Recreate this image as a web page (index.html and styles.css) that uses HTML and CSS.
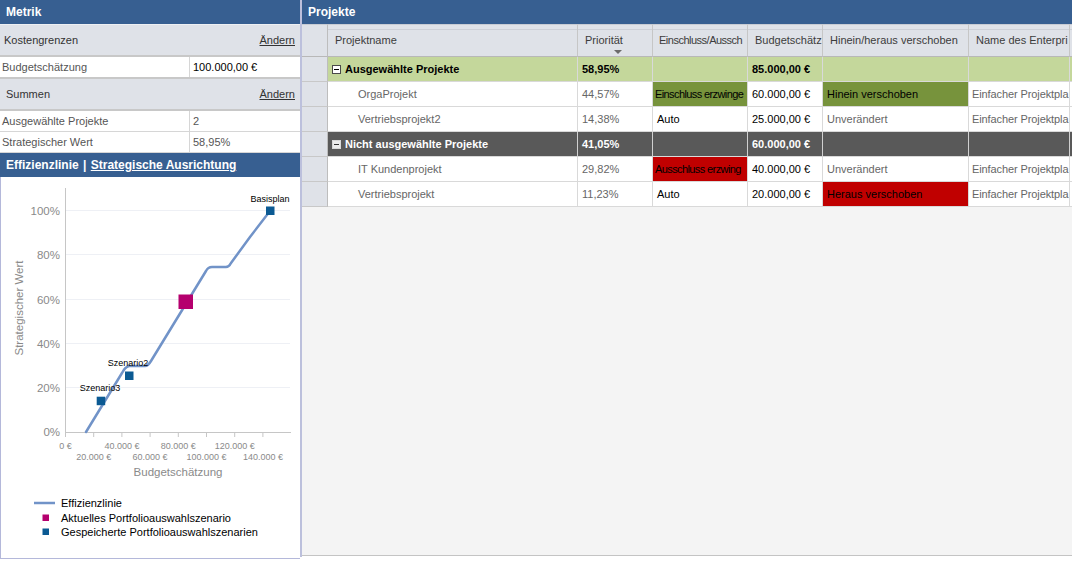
FILE: index.html
```html
<!DOCTYPE html>
<html lang="de">
<head>
<meta charset="utf-8">
<title>Portfolioanalyse</title>
<link rel="stylesheet" href="styles.css">
</head>
<body>
<div class="app">
  <aside class="left">
    <div class="ptitle">Metrik</div>
    <div class="band band-first"><span>Kostengrenzen</span><a class="link">Ändern</a></div>
    <div class="kv kv-single"><div class="k">Budgetschätzung</div><div class="v v-strong">100.000,00 €</div></div>
    <div class="band band-sum"><span>Summen</span><a class="link">Ändern</a></div>
    <div class="kvlist">
      <div class="kv"><div class="k">Ausgewählte Projekte</div><div class="v">2</div></div>
      <div class="kv"><div class="k">Strategischer Wert</div><div class="v">58,95%</div></div>
    </div>
    <div class="ptitle">Effizienzlinie <span class="sep">|</span> <a class="tlink">Strategische Ausrichtung</a></div>
    <div class="chart">
      <svg class="plot" width="299" height="381" viewBox="1 177 299 381" xmlns="http://www.w3.org/2000/svg" font-family="Liberation Sans, Arial, sans-serif">
        <g stroke="#eef0f5" stroke-width="1">
          <line x1="66" y1="210.5" x2="290" y2="210.5"/>
          <line x1="66" y1="254.5" x2="290" y2="254.5"/>
          <line x1="66" y1="299.5" x2="290" y2="299.5"/>
          <line x1="66" y1="343.5" x2="290" y2="343.5"/>
          <line x1="66" y1="387.5" x2="290" y2="387.5"/>
        </g>
        <g stroke="#c6c6c6" stroke-width="1">
          <line x1="65.5" y1="188" x2="65.5" y2="433"/>
          <line x1="65" y1="432.5" x2="291" y2="432.5"/>
          <line x1="65.5" y1="432" x2="65.5" y2="437"/>
          <line x1="93.7" y1="432" x2="93.7" y2="437"/>
          <line x1="121.9" y1="432" x2="121.9" y2="437"/>
          <line x1="150.1" y1="432" x2="150.1" y2="437"/>
          <line x1="178.3" y1="432" x2="178.3" y2="437"/>
          <line x1="206.5" y1="432" x2="206.5" y2="437"/>
          <line x1="234.7" y1="432" x2="234.7" y2="437"/>
          <line x1="262.9" y1="432" x2="262.9" y2="437"/>
        </g>
        <g fill="#8a8a8a" font-size="11.5" text-anchor="end">
          <text x="60" y="215">100%</text>
          <text x="60" y="259">80%</text>
          <text x="60" y="303.5">60%</text>
          <text x="60" y="347.5">40%</text>
          <text x="60" y="392">20%</text>
          <text x="60" y="436">0%</text>
        </g>
        <g fill="#8a8a8a" font-size="9" text-anchor="middle">
          <text x="65.5" y="448.5">0 €</text>
          <text x="121.9" y="448.5">40.000 €</text>
          <text x="178.3" y="448.5">80.000 €</text>
          <text x="234.7" y="448.5">120.000 €</text>
          <text x="93.7" y="460">20.000 €</text>
          <text x="150.1" y="460">60.000 €</text>
          <text x="206.5" y="460">100.000 €</text>
          <text x="262.9" y="460">140.000 €</text>
        </g>
        <text x="178" y="476" fill="#8a8a8a" font-size="11.5" text-anchor="middle">Budgetschätzung</text>
        <text transform="translate(23 308) rotate(-90)" fill="#8a8a8a" font-size="11.5" text-anchor="middle">Strategischer Wert</text>
        <path d="M86 432 L122 373 Q125 367 129 366 L145 366 Q148 366 151 361 L206 271 Q208 267 212 267 L226 267 Q229 267 231 263 L250 237 L270 211" fill="none" stroke="#7193c8" stroke-width="2.5" stroke-linejoin="round" stroke-linecap="round"/>
        <rect x="178.5" y="294.5" width="14.5" height="14.5" fill="#b5006e"/>
        <rect x="266" y="206.5" width="8.5" height="8.5" fill="#0b5a93"/>
        <rect x="125" y="371.5" width="8.5" height="8.5" fill="#0b5a93"/>
        <rect x="96.7" y="396.7" width="8.5" height="8.5" fill="#0b5a93"/>
        <g fill="#000" font-size="9" text-anchor="middle">
          <text x="270" y="202">Basisplan</text>
          <text x="128" y="365.5">Szenario2</text>
          <text x="100" y="391">Szenario3</text>
        </g>
        <line x1="34" y1="503" x2="55" y2="503" stroke="#7193c8" stroke-width="2.5"/>
        <rect x="42.5" y="514.5" width="6.5" height="6.5" fill="#b5006e"/>
        <rect x="42.5" y="528.5" width="6.5" height="6.5" fill="#0b5a93"/>
        <g fill="#000" font-size="11">
          <text x="61" y="507">Effizienzlinie</text>
          <text x="61" y="522">Aktuelles Portfolioauswahlszenario</text>
          <text x="61" y="536">Gespeicherte Portfolioauswahlszenarien</text>
        </g>
      </svg>
    </div>
  </aside>
  <div class="divider"></div>
  <main class="right">
    <div class="ptitle">Projekte</div>
    <div class="gridwrap">
      <div class="grid">
        <div class="hc hc-ind"></div>
        <div class="hc">Projektname</div>
        <div class="hc">Priorität<span class="sort"></span></div>
        <div class="hc hc-tight">Einschluss/Aussch</div>
        <div class="hc">Budgetschätz</div>
        <div class="hc">Hinein/heraus verschoben</div>
        <div class="hc">Name des Enterpri</div>
        <div class="hc"></div>

        <div class="c ind"></div>
        <div class="c g1 gname"><span class="tog"></span>Ausgewählte Projekte</div>
        <div class="c g1">58,95%</div>
        <div class="c g1"></div>
        <div class="c g1">85.000,00 €</div>
        <div class="c g1"></div>
        <div class="c g1"></div>
        <div class="c g1"></div>

        <div class="c ind"></div>
        <div class="c name">OrgaProjekt</div>
        <div class="c muted">44,57%</div>
        <div class="c dark tight green">Einschluss erzwinge</div>
        <div class="c dark">60.000,00 €</div>
        <div class="c dark green">Hinein verschoben</div>
        <div class="c muted last">Einfacher Projektpla</div>
        <div class="c"></div>

        <div class="c ind"></div>
        <div class="c name">Vertriebsprojekt2</div>
        <div class="c muted">14,38%</div>
        <div class="c dark">Auto</div>
        <div class="c dark">25.000,00 €</div>
        <div class="c muted">Unverändert</div>
        <div class="c muted last">Einfacher Projektpla</div>
        <div class="c"></div>

        <div class="c ind"></div>
        <div class="c g2 gname"><span class="tog tog-dark"></span>Nicht ausgewählte Projekte</div>
        <div class="c g2">41,05%</div>
        <div class="c g2"></div>
        <div class="c g2">60.000,00 €</div>
        <div class="c g2"></div>
        <div class="c g2"></div>
        <div class="c g2"></div>

        <div class="c ind"></div>
        <div class="c name">IT Kundenprojekt</div>
        <div class="c muted">29,82%</div>
        <div class="c dark tight red">Ausschluss erzwing</div>
        <div class="c dark">40.000,00 €</div>
        <div class="c muted">Unverändert</div>
        <div class="c muted last">Einfacher Projektpla</div>
        <div class="c"></div>

        <div class="c ind"></div>
        <div class="c name">Vertriebsprojekt</div>
        <div class="c muted">11,23%</div>
        <div class="c dark">Auto</div>
        <div class="c dark">20.000,00 €</div>
        <div class="c dark red">Heraus verschoben</div>
        <div class="c muted last">Einfacher Projektpla</div>
        <div class="c"></div>
      </div>
    </div>
  </main>
</div>
</body>
</html>
```
FILE: styles.css
```css
* { box-sizing: border-box; }
html, body { margin: 0; padding: 0; background: #fff; }
body {
  font-family: "Liberation Sans", Arial, sans-serif;
  font-size: 11px;
  color: #333;
}
.app { display: flex; width: 1072px; height: 567px; overflow: hidden; }

.left { width: 300px; height: 559px; display: flex; flex-direction: column; flex: none; }
.divider { width: 2px; height: 557px; background: #bcc0dc; flex: none; }
.right {
  flex: 1; min-width: 0; height: 556px;
  display: flex; flex-direction: column;
  background: #f4f4f4; border-bottom: 1px solid #c4c4c4;
}

.ptitle {
  height: 24px; flex: none;
  background: #375f91; color: #fff;
  font-weight: bold; font-size: 12px; line-height: 24px;
  padding-left: 6px; white-space: nowrap;
}
.sep { padding: 0 1px; }
.tlink { color: #fff; text-decoration: underline; }

.band {
  height: 31px; flex: none;
  border-top: 1px solid #eef0f3;
  background: #dfe2e8;
  display: flex; align-items: center; justify-content: space-between;
  padding: 0 5px 0 4px; color: #333;
}
.band-sum { height: 30px; border-top: none; padding-left: 6px; }
.link { color: #333; text-decoration: underline; }

.kv { display: flex; height: 21px; flex: none; border-bottom: 1px solid #d6d6d6; background: #fff; }
.kv-single { height: 24px; border-top: 2px solid #c8c8c8; border-bottom: 2px solid #c8c8c8; }
.kvlist { border-top: 2px solid #c8c8c8; flex: none; }
.k { width: 190px; border-right: 1px solid #d6d6d6; padding-left: 2px; color: #555; line-height: 20px; }
.v { padding-left: 3px; line-height: 20px; color: #555; }
.v-strong { color: #000; }

.chart {
  flex: 1;
  background: #fff;
  border-left: 1px solid #b4b8da;
  border-bottom: 1px solid #b4b8da;
}
.plot { display: block; }

.gridwrap { overflow: hidden; flex: none; }
.grid {
  display: grid;
  grid-template-columns: 26px 250px 75px 95px 75px 146px 101px 100px;
  width: max-content;
}
.hc {
  height: 33px;
  border-top: 1px solid #c8ccd4;
  border-right: 1px solid #c6c6c6;
  border-bottom: 1px solid #b8b8b8;
  background: linear-gradient(#dfe2e8 0 4px, #cdd0d7 4px 5px, #dfe2e8 5px);
  padding: 8px 0 0 7px;
  color: #3c3c3c;
  line-height: 14px;
  white-space: nowrap; overflow: hidden;
}
.hc-tight { padding-left: 6px; letter-spacing: -0.5px; }
.hc-ind { background: #dfe2e8; border-right-color: #bdbdbd; }
.sort {
  display: block; width: 0; height: 0;
  margin: 3px 0 0 29px;
  border-left: 4px solid transparent;
  border-right: 4px solid transparent;
  border-top: 4px solid #6b6b6b;
}

.c {
  height: 25px;
  border-right: 1px solid #d9d9d9;
  border-bottom: 1px solid #d9d9d9;
  background: #fff;
  line-height: 24px;
  padding-left: 4px;
  white-space: nowrap; overflow: hidden;
  color: #666;
}
.ind { background: #dfe2e8; border-right-color: #bdbdbd; border-bottom-color: #c8c8c8; }
.name { padding-left: 30px; }
.muted { color: #666; }
.dark { color: #000; }
.tight { padding-left: 2px; letter-spacing: -0.6px; }
.last { padding-left: 3px; letter-spacing: -0.1px; }
.green { background: #77933c; }
.red { background: #c00000; }

.g1 { background: #c4d79b; color: #000; font-weight: bold; }
.g2 { background: #595959; color: #fff; font-weight: bold; border-right-color: #d0d0d0; }
.gname { display: flex; align-items: center; padding-left: 4px; }

.tog {
  position: relative;
  display: inline-block;
  width: 9px; height: 9px;
  margin-right: 4px;
  border: 1px solid #4a4a4a;
  background: #fff;
}
.tog::after {
  content: "";
  position: absolute;
  left: 1px; top: 3px;
  width: 5px; height: 1px;
  background: #000;
}
.tog-dark { border-color: #d8d8d8; background: #ececec; }
.tog-dark::after { background: #333; }
```
